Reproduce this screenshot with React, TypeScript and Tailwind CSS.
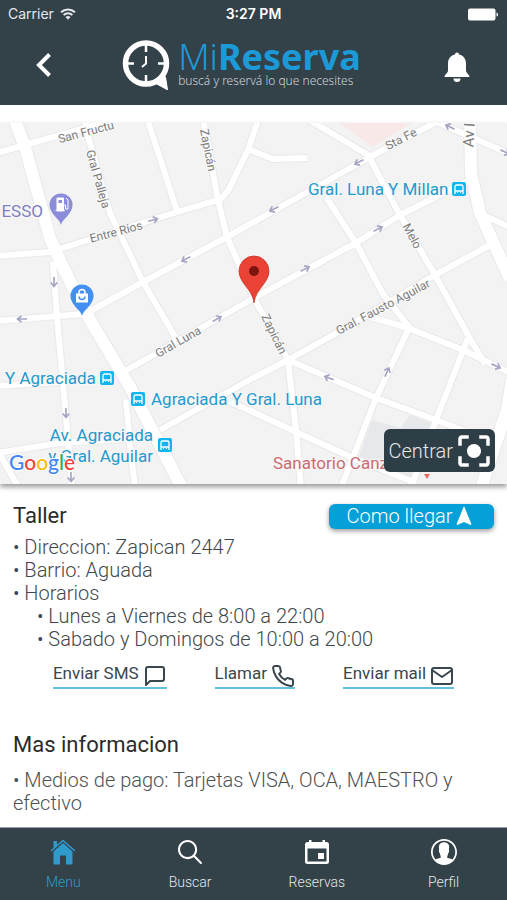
import { FiMail, FiMessageSquare, FiPhone } from 'react-icons/fi';
import { IoIosContact, IoIosSearch } from 'react-icons/io';
import { MdCenterFocusStrong, MdNavigation } from 'react-icons/md';

interface StreetLabel {
  text: string;
  x: number;
  y: number;
  angle: number;
  size?: number;
}

interface IconProps {
  className?: string;
}

const avenues = [
  'M14 118 L25 147 L50 238 L62 265 L87 315 L130 387 L182 488',
  'M470 118 L471 173 L480 213 L510 279',
  'M512 380 L507 410 L481 488',
];

const streets = [
  'M-3 153 L25 145 L113 120',
  'M85 118 L87 133 L110 213 L143 282 L177 340',
  'M147 118 L177 211',
  'M203 118 L218 200 L227 237 L254 298 L288 360 L296 430 L301 488',
  'M218 202 L228 191 L248 150 L259 118',
  'M248 149 L273 159 L307 158',
  'M-3 256 L50 252 L177 212 L218 200',
  'M85 314 L143 282 L227 237 L370 157 L440 120',
  'M306 118 L368 155 L400 215 L435 275 L468 335 L485 364',
  'M326 197 L356 243 L383 294 L410 328',
  'M125 371 L254 298 L356 243 L400 215 L470 180',
  'M483 215 L510 227',
  'M430 119 L510 154',
  'M490 245 L435 275 L333 335 L288 360 L253 378 L160 430',
  'M371 317 L408 328 L463 350 L510 373',
  'M409 328 L376 398 L341 488',
  'M288 360 L376 398 L436 420 L465 431',
  'M468 338 L436 420 L411 488',
  'M230 402 L253 412 L296 432 L353 458 L416 483',
  'M53 262 L57 317 L67 428 L72 488',
  'M-3 321 L83 314',
  'M-3 386 L60 382',
  'M-3 453 L60 443 L128 439',
  'M0 455 L19 488',
  'M126 400 L130 445 L135 488',
];

const streetLabels: StreetLabel[] = [
  { text: 'San Fructu', x: 86, y: 132, angle: -15 },
  { text: 'Gral Palleja', x: 98, y: 179, angle: 74 },
  { text: 'Entre Ríos', x: 116, y: 232, angle: -15 },
  { text: 'Zapicán', x: 208, y: 150, angle: 79 },
  { text: 'Sta Fe', x: 401, y: 139, angle: -27 },
  { text: 'Av I', x: 470, y: 135, angle: -86, size: 15 },
  { text: 'Melo', x: 412, y: 236, angle: 62 },
  { text: 'Gral. Fausto Aguilar', x: 383, y: 307, angle: -28 },
  { text: 'Zapicán', x: 274, y: 334, angle: 64 },
  { text: 'Gral Luna', x: 178, y: 342, angle: -30 },
];

const arrows = [
  [153, 220, -15],
  [186, 259, 153],
  [54, 282, 90],
  [359, 162, 153],
  [274, 209, 153],
  [378, 229, -27],
  [305, 269, -27],
  [450, 127, 205],
  [505, 152, 25],
  [22, 319, 180],
  [217, 319, -30],
  [66, 413, 88],
  [71, 477, 88],
  [329, 378, 200],
  [387, 372, -65],
  [496, 366, 25],
];

const stops = [
  [459, 189],
  [107, 378],
  [138, 399],
  [165, 445],
];

const details = ['Direccion: Zapican 2447', 'Barrio: Aguada', 'Horarios'];
const hours = ['Lunes a Viernes de 8:00 a 22:00', 'Sabado y Domingos de 10:00 a 20:00'];

const contacts = [
  { label: 'Enviar SMS', icon: FiMessageSquare, href: '#sms' },
  { label: 'Llamar', icon: FiPhone, href: '#llamar' },
  { label: 'Enviar mail', icon: FiMail, href: '#mail' },
];

const tabs = [
  { label: 'Menu', icon: HomeIcon, active: true },
  { label: 'Buscar', icon: IoIosSearch, active: false },
  { label: 'Reservas', icon: CalendarIcon, active: false },
  { label: 'Perfil', icon: IoIosContact, active: false },
];

function HomeIcon({ className }: IconProps) {
  return (
    <svg viewBox="0 0 32 32" className={className} fill="currentColor">
      <path d="M6.500 5H10v4l-3.500 3z" />
      <path d="M4 15 16 4.500 28 15" fill="none" stroke="currentColor" strokeWidth="1.600" />
      <path d="M6.500 15.500 16 7l9.500 8.500V27.500a1 1 0 0 1-1 1H19v-9h-6v9H7.500a1 1 0 0 1-1-1z" />
    </svg>
  );
}

function CalendarIcon({ className }: IconProps) {
  return (
    <svg viewBox="0 0 32 32" className={className} fill="currentColor">
      <path
        fillRule="evenodd"
        d="M8 4h2.500v2h11V4H24v2h1.500A2.500 2.500 0 0 1 28 8.500v17a2.500 2.500 0 0 1-2.500 2.500h-19A2.500 2.500 0 0 1 4 25.500v-17A2.500 2.500 0 0 1 6.500 6H8zM6.500 12.500v13h19v-13z"
      />
      <rect x="17" y="17" width="6" height="6" />
    </svg>
  );
}

function BellIcon({ className }: IconProps) {
  return (
    <svg viewBox="0 0 36 36" className={className} fill="currentColor">
      <path d="M18 5.500a2 2 0 0 1 2 2c5 1 7 5 7 9v7c0 3 3.500 3.500 3.500 6.500h-25c0-3 3.500-3.500 3.500-6.500v-7c0-4 2-8 7-9a2 2 0 0 1 2-2z" />
      <path d="M14.500 31.500h7a3.500 3.500 0 0 1-7 0z" />
    </svg>
  );
}

function StatusBar() {
  return (
    <div className="grid h-7 grid-cols-3 items-center px-2 font-['Inter',sans-serif] text-sm text-white">
      <div className="flex items-center gap-1.5 text-gray-200">
        <span>Carrier</span>
        <svg viewBox="0 0 16 12" className="h-3 w-4" fill="none" stroke="currentColor" strokeWidth="2">
          <path d="M1 4.200a10.200 10.200 0 0 1 14 0" />
          <path d="M3.600 7a6.300 6.300 0 0 1 8.800 0" />
          <path d="M8 11.800 5.500 9.100a3.600 3.600 0 0 1 5 0z" fill="currentColor" stroke="none" />
        </svg>
      </div>
      <span className="text-center font-semibold">3:27 PM</span>
      <svg viewBox="0 0 31 13" className="h-[13px] w-[31px] justify-self-end" fill="currentColor">
        <rect x="0" y="0.5" width="27.5" height="12" rx="2" />
        <path d="M28.500 4.500c2 .5 2 3.500 0 4z" />
      </svg>
    </div>
  );
}

function Logo() {
  return (
    <div className="flex items-center gap-2 pr-3">
      <svg viewBox="0 0 48 50" className="h-[50px] w-12" fill="none" stroke="#fff">
        <circle cx="24" cy="23.500" r="20.500" strokeWidth="5.500" />
        <path d="M33 43 45.500 49.800 43.500 37 40 34z" fill="#fff" strokeWidth="1" strokeLinejoin="round" />
        <path d="M24 5v7M24 35v7M5.500 23.500h6.500M36 23.500h7" strokeWidth="2.500" />
        <path d="M24 16v7.500l-4 3.500" strokeWidth="2" />
      </svg>
      <div className="flex flex-col font-['Noto_Sans',sans-serif]">
        <span className="text-4xl leading-9 font-light text-[#1c9ad8]">
          Mi<b className="font-bold">Reserva</b>
        </span>
        <span className="pb-1 text-xs leading-3 font-light text-gray-300">buscá y reservá lo que necesites</span>
      </div>
    </div>
  );
}

function Map() {
  return (
    <div className="relative shadow-[0_3px_5px_rgba(0,0,0,0.4)]">
      <svg viewBox="0 123 507 361" className="block w-full font-['Roboto',sans-serif]">
        <rect x="0" y="123" width="507" height="361" fill="#f3f3f4" />
        <path d="M340 123h72l-40 24z" fill="#f8e9e8" />
        <path d="M359 457 372 420l29 8 9-13 24 9-24 60z" fill="#e6e8eb" />
        <g fill="none" strokeLinejoin="round">
          {streets.map((d) => (
            <path key={d} d={d} stroke="#e9e9eb" strokeWidth="8" />
          ))}
          {avenues.map((d) => (
            <path key={d} d={d} stroke="#e9e9eb" strokeWidth="14" />
          ))}
          {streets.map((d) => (
            <path key={d} d={d} stroke="#fff" strokeWidth="6" />
          ))}
          {avenues.map((d) => (
            <path key={d} d={d} stroke="#fff" strokeWidth="12" />
          ))}
        </g>
        {arrows.map(([x, y, angle]) => (
          <path
            key={`${x}-${y}`}
            d="M-5 0H4M0.500 -3.200 4.500 0 0.500 3.200"
            transform={`translate(${x} ${y}) rotate(${angle})`}
            fill="none"
            stroke="#a5a5c4"
            strokeWidth="1.700"
          />
        ))}
        <g fill="#7c7c7c" stroke="#fafafa" strokeWidth="2" paintOrder="stroke" textAnchor="middle">
          {streetLabels.map((label) => (
            <text
              key={`${label.text}-${label.x}`}
              transform={`translate(${label.x} ${label.y}) rotate(${label.angle})`}
              dy="4"
              fontSize={label.size ?? 12}
            >
              {label.text}
            </text>
          ))}
        </g>
        <g fontSize="17" fill="#2499cc" stroke="#f8f8f8" strokeWidth="2" paintOrder="stroke">
          <text x="308" y="195">Gral. Luna Y Millan</text>
          <text x="5" y="384">Y Agraciada</text>
          <text x="151" y="405">Agraciada Y Gral. Luna</text>
          <text x="153" y="441" textAnchor="end">Av. Agraciada</text>
          <text x="153" y="462" textAnchor="end">y Gral. Aguilar</text>
          <text x="273" y="469" fill="#cc6a70">Sanatorio Canzani</text>
          <text x="43" y="217" textAnchor="end" fill="#7d80c0">ESSO</text>
        </g>
        {stops.map(([x, y]) => (
          <g key={`${x}-${y}`} transform={`translate(${x} ${y})`}>
            <rect x="-7" y="-7" width="14" height="14" rx="2" fill="#12b5ee" />
            <path d="M-4 5V-2.500Q-4 -4 -2.500 -4H2.500Q4 -4 4 -2.500V5M-4 2H4" fill="none" stroke="#fff" strokeWidth="1.300" />
            <path d="M-2 3.500h1M1 3.500h1" stroke="#fff" />
          </g>
        ))}
        {/* gas station */}
        <path d="M61 225C60 219 49.500 214 49.500 205a11.500 11.500 0 0 1 23 0C72.500 214 62 219 61 225z" fill="#8b8ddb" />
        <path d="M57 198h6.500v13H57zM55.500 210.500h9.500" fill="#fff" stroke="#fff" />
        <path d="M58.500 200h3.500v3h-3.500z" fill="#8b8ddb" />
        <path d="M64 205h1.500v4h2.500v-9l-2-2" fill="none" stroke="#fff" />
        {/* shop */}
        <path d="M82 316C81 310 70.500 305 70.500 296a11.500 11.500 0 0 1 23 0C93.500 305 83 310 82 316z" fill="#4490f0" />
        <path d="M76 293.500h12v9H76z" fill="#fff" />
        <path d="M79 294v-1.500a3 3 0 0 1 6 0v1.500" fill="none" stroke="#fff" strokeWidth="1.500" />
        <path d="M79 296.500a3 3 0 0 0 6 0" fill="none" stroke="#4490f0" strokeWidth="1.500" />
        <path d="M424 474h6l-3 5z" fill="#e8695f" />
        {/* selected place */}
        <path d="M254 303C252.500 289 239 283 239 271a15 15 0 0 1 30 0C269 283 255.500 289 254 303z" fill="#ea4335" stroke="#c9362b" strokeWidth="0.800" />
        <circle cx="254" cy="271" r="5" fill="#7b1510" />
        <text x="9" y="470" fontSize="21" className="font-['Lato',sans-serif] font-medium" stroke="#fff" strokeWidth="2" paintOrder="stroke">
          <tspan fill="#4285f4">G</tspan>
          <tspan fill="#ea4335">o</tspan>
          <tspan fill="#fbbc05">o</tspan>
          <tspan fill="#4285f4">g</tspan>
          <tspan fill="#34a853">l</tspan>
          <tspan fill="#ea4335">e</tspan>
        </text>
      </svg>
      <button className="absolute right-3 bottom-3 flex h-[43px] items-center rounded-md bg-[#2d3e46] pl-1 text-xl font-light text-gray-200">
        Centrar
        <MdCenterFocusStrong className="size-[42px] text-white" />
      </button>
    </div>
  );
}

export default function App() {
  return (
    <div className="flex min-h-screen flex-col bg-white font-['Roboto',sans-serif]">
      <header className="bg-[#334148] pb-1">
        <StatusBar />
        <div className="flex h-[73px] items-center justify-between px-8">
          <button aria-label="Volver" className="text-white">
            <svg viewBox="0 0 24 24" className="size-6" fill="none" stroke="currentColor" strokeWidth="4">
              <path d="M17.500 1.500 7 12l10.500 10.500" />
            </svg>
          </button>
          <Logo />
          <button aria-label="Notificaciones" className="text-white">
            <BellIcon className="size-9" />
          </button>
        </div>
      </header>

      <main className="flex-1 pt-[18px]">
        <Map />

        <section className="px-[13px] pt-[18px]">
          <div className="flex items-center justify-between">
            <h2 className="text-[22px] leading-7 text-[#2b2b2b]">Taller</h2>
            <button className="flex h-[25px] w-[165px] items-center justify-center rounded-md bg-[#06a0d8] text-xl font-light text-white shadow-[0_2px_5px_rgba(0,0,0,0.4)]">
              Como llegar
              <MdNavigation className="size-6" />
            </button>
          </div>
          <ul className="pt-1.5 text-xl leading-[23px] font-light text-[#3f484c]">
            {details.map((item) => (
              <li key={item}>• {item}</li>
            ))}
            {hours.map((item) => (
              <li key={item} className="pl-6">
                • {item}
              </li>
            ))}
          </ul>
          <div className="flex justify-center gap-12 pt-3">
            {contacts.map(({ label, icon: Icon, href }) => (
              <a key={label} href={href} className="flex h-[26px] gap-1 border-b-2 border-[#62bfe0] text-[17px] leading-5 text-[#3a474e]">
                {label}
                <Icon className="mt-px size-6" />
              </a>
            ))}
          </div>
        </section>

        <section className="px-[13px] pt-[42px] pb-3">
          <h2 className="text-[22px] leading-7 text-[#2b2b2b]">Mas informacion</h2>
          <p className="pt-2.5 text-xl leading-[23px] font-light text-[#4c5256]">
            • Medios de pago: Tarjetas VISA, OCA, MAESTRO y efectivo
          </p>
        </section>
      </main>

      <nav className="grid h-[74px] grid-cols-4 border-t border-gray-400 bg-[#334148]">
        {tabs.map(({ label, icon: Icon, active }) => (
          <button
            key={label}
            className={`flex flex-col items-center gap-1 pt-2 text-sm font-light ${active ? 'text-[#2f9bcd]' : 'text-white'}`}
          >
            <Icon className="size-8" />
            <span className={active ? '' : 'text-gray-200'}>{label}</span>
          </button>
        ))}
      </nav>
    </div>
  );
}
